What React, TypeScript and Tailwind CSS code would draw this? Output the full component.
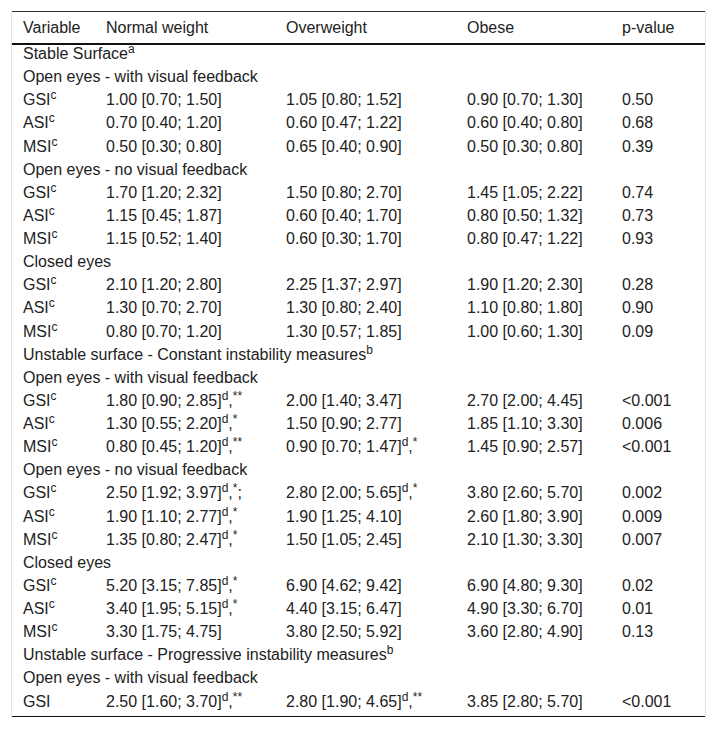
type Row =
  | { kind: "section"; label: React.ReactNode }
  | { kind: "data"; name: string; sup?: boolean; cells: React.ReactNode[] };

const d = (base: string, stars: string, tail = "") => (
  <>
    {base}
    <sup>d</sup>,<sup>{stars}</sup>
    {tail}
  </>
);

const rows: Row[] = [
  { kind: "section", label: <>Stable Surface<sup>a</sup></> },
  { kind: "section", label: "Open eyes - with visual feedback" },
  { kind: "data", name: "GSI", sup: true, cells: ["1.00 [0.70; 1.50]", "1.05 [0.80; 1.52]", "0.90 [0.70; 1.30]", "0.50"] },
  { kind: "data", name: "ASI", sup: true, cells: ["0.70 [0.40; 1.20]", "0.60 [0.47; 1.22]", "0.60 [0.40; 0.80]", "0.68"] },
  { kind: "data", name: "MSI", sup: true, cells: ["0.50 [0.30; 0.80]", "0.65 [0.40; 0.90]", "0.50 [0.30; 0.80]", "0.39"] },
  { kind: "section", label: "Open eyes - no visual feedback" },
  { kind: "data", name: "GSI", sup: true, cells: ["1.70 [1.20; 2.32]", "1.50 [0.80; 2.70]", "1.45 [1.05; 2.22]", "0.74"] },
  { kind: "data", name: "ASI", sup: true, cells: ["1.15 [0.45; 1.87]", "0.60 [0.40; 1.70]", "0.80 [0.50; 1.32]", "0.73"] },
  { kind: "data", name: "MSI", sup: true, cells: ["1.15 [0.52; 1.40]", "0.60 [0.30; 1.70]", "0.80 [0.47; 1.22]", "0.93"] },
  { kind: "section", label: "Closed eyes" },
  { kind: "data", name: "GSI", sup: true, cells: ["2.10 [1.20; 2.80]", "2.25 [1.37; 2.97]", "1.90 [1.20; 2.30]", "0.28"] },
  { kind: "data", name: "ASI", sup: true, cells: ["1.30 [0.70; 2.70]", "1.30 [0.80; 2.40]", "1.10 [0.80; 1.80]", "0.90"] },
  { kind: "data", name: "MSI", sup: true, cells: ["0.80 [0.70; 1.20]", "1.30 [0.57; 1.85]", "1.00 [0.60; 1.30]", "0.09"] },
  { kind: "section", label: <>Unstable surface - Constant instability measures<sup>b</sup></> },
  { kind: "section", label: "Open eyes - with visual feedback" },
  { kind: "data", name: "GSI", sup: true, cells: [d("1.80 [0.90; 2.85]", "**"), "2.00 [1.40; 3.47]", "2.70 [2.00; 4.45]", "<0.001"] },
  { kind: "data", name: "ASI", sup: true, cells: [d("1.30 [0.55; 2.20]", "*"), "1.50 [0.90; 2.77]", "1.85 [1.10; 3.30]", "0.006"] },
  { kind: "data", name: "MSI", sup: true, cells: [d("0.80 [0.45; 1.20]", "**"), d("0.90 [0.70; 1.47]", "*"), "1.45 [0.90; 2.57]", "<0.001"] },
  { kind: "section", label: "Open eyes - no visual feedback" },
  { kind: "data", name: "GSI", sup: true, cells: [d("2.50 [1.92; 3.97]", "*", ";"), d("2.80 [2.00; 5.65]", "*"), "3.80 [2.60; 5.70]", "0.002"] },
  { kind: "data", name: "ASI", sup: true, cells: [d("1.90 [1.10; 2.77]", "*"), "1.90 [1.25; 4.10]", "2.60 [1.80; 3.90]", "0.009"] },
  { kind: "data", name: "MSI", sup: true, cells: [d("1.35 [0.80; 2.47]", "*"), "1.50 [1.05; 2.45]", "2.10 [1.30; 3.30]", "0.007"] },
  { kind: "section", label: "Closed eyes" },
  { kind: "data", name: "GSI", sup: true, cells: [d("5.20 [3.15; 7.85]", "*"), "6.90 [4.62; 9.42]", "6.90 [4.80; 9.30]", "0.02"] },
  { kind: "data", name: "ASI", sup: true, cells: [d("3.40 [1.95; 5.15]", "*"), "4.40 [3.15; 6.47]", "4.90 [3.30; 6.70]", "0.01"] },
  { kind: "data", name: "MSI", sup: true, cells: ["3.30 [1.75; 4.75]", "3.80 [2.50; 5.92]", "3.60 [2.80; 4.90]", "0.13"] },
  { kind: "section", label: <>Unstable surface - Progressive instability measures<sup>b</sup></> },
  { kind: "section", label: "Open eyes - with visual feedback" },
  { kind: "data", name: "GSI", cells: [d("2.50 [1.60; 3.70]", "**"), d("2.80 [1.90; 4.65]", "**"), "3.85 [2.80; 5.70]", "<0.001"] },
];

const cols = "grid grid-cols-[83px_180px_181px_155px_1fr]";

export default function App() {
  return (
    <div className="min-h-[729px] bg-white pt-[11px] pl-[11px] font-['Liberation_Sans',Arial,sans-serif] text-[16px] text-[#222]">
      <div className="w-[695px] border-x border-[#e2e2e2]">
        <div className={`${cols} h-[34px] items-center border-t border-b-2 border-t-[#333] border-b-[#111]`}>
          {["Variable", "Normal weight", "Overweight", "Obese", "p-value"].map((h) => (
            <div key={h} className="pl-[11px]">{h}</div>
          ))}
        </div>
        <div className="border-b border-[#111]">
          {rows.map((r, i) =>
            r.kind === "section" ? (
              <div key={i} className="flex h-[23.14px] items-center pb-[5px] pl-[11px] leading-none">
                <span>{r.label}</span>
              </div>
            ) : (
              <div key={i} className={`${cols} h-[23.14px] items-center pb-[5px] leading-none`}>
                <div className="pl-[11px]">
                  {r.name}
                  {r.sup && <sup>c</sup>}
                </div>
                {r.cells.map((c, j) => (
                  <div key={j} className="pl-[11px] whitespace-nowrap">{c}</div>
                ))}
              </div>
            )
          )}
        </div>
      </div>
    </div>
  );
}
